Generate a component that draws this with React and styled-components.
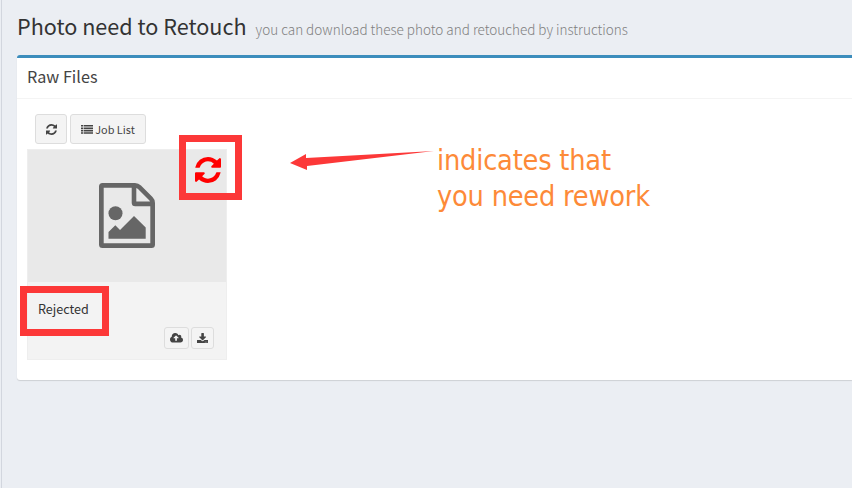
import React from "react";
import styled, { createGlobalStyle } from "styled-components";

const Global = createGlobalStyle`
  * { box-sizing: border-box; }
  body { margin: 0; background: #ebeef3; overflow: hidden; }
`;

const Page = styled.main`
  height: 488px;
  border-left: 1px solid #d2d6de;
  margin-left: 1px;
  padding-left: 15px;
  background: #ebeef3;
  color: #333;
  font-family: "Noto Sans CJK SC", "Open Sans", sans-serif;
`;

const Header = styled.header`
  display: flex;
  align-items: baseline;
  gap: 9px;
  height: 55px;
  padding-top: 10px;
  white-space: nowrap;
`;

const Title = styled.h1`
  margin: 0;
  font-size: 21.6px;
  line-height: 32px;
  font-weight: 400;
`;

const Subtitle = styled.small`
  font-size: 13.5px;
  line-height: 20px;
  font-weight: 200;
  color: #808080;
`;

const Box = styled.section`
  position: relative;
  height: 325px;
  background: #fff;
  border-top: 3px solid #3c8dbc;
  border-radius: 3px 0 0 3px;
  box-shadow: 0 1px 1px rgba(0, 0, 0, 0.13);
`;

const BoxHeader = styled.div`
  height: 41px;
  border-bottom: 1px solid #f4f4f4;
  padding: 7px 10px;
`;

const BoxTitle = styled.h3`
  margin: 0;
  font-size: 16.2px;
  line-height: 22px;
  font-weight: 400;
  color: #444;
`;

const BoxBody = styled.div`
  padding: 15px 10px;
`;

const Toolbar = styled.div`
  display: flex;
  gap: 3px;
  padding-left: 8px;
  margin-bottom: 5px;
`;

const Button = styled.button`
  display: flex;
  align-items: center;
  justify-content: center;
  gap: 2px;
  width: ${(p) => p.$w}px;
  height: ${(p) => p.$h}px;
  padding: 0;
  border: 1px solid #ddd;
  border-radius: 3px;
  background: #f4f4f4;
  color: #444;
  font: 400 10.9px/16px "Noto Sans CJK SC", "Open Sans", sans-serif;
`;

const Icon = styled.svg`
  display: block;
  fill: currentColor;
`;

const Card = styled.article`
  width: 200px;
  height: 211px;
  border: 1px solid #eee;
  background: #f3f3f3;
`;

const Preview = styled.div`
  position: relative;
  display: flex;
  justify-content: center;
  height: 132px;
  padding-top: 33px;
  background: #e9e9e9;
  color: #666;
`;

const ReworkBadge = styled.div`
  position: absolute;
  top: 7px;
  right: 5px;
  color: #f00;
`;

const Details = styled.div`
  padding: 17px 12px 0 10px;
`;

const Status = styled.div`
  font-size: 12.6px;
  line-height: 20px;
`;

const Actions = styled.div`
  display: flex;
  justify-content: flex-end;
  gap: 2px;
  margin-top: 8px;
`;

const Highlight = styled.div`
  position: absolute;
  left: ${(p) => p.$x}px;
  top: ${(p) => p.$y}px;
  width: ${(p) => p.$w}px;
  height: ${(p) => p.$h}px;
  border: 7px solid #fc3838;
`;

const Arrow = styled.svg`
  position: absolute;
  left: 273px;
  top: 92px;
`;

const Note = styled.p`
  position: absolute;
  left: 420px;
  top: 84px;
  margin: 0;
  font: 28.6px/36px "DejaVu Sans Condensed", "DejaVu Sans", sans-serif;
  font-stretch: condensed;
  letter-spacing: -0.2px;
  white-space: nowrap;
  color: #fd8a38;
`;

function RefreshIcon({ size }) {
  return (
    <Icon width={size} height={size} viewBox="0 0 1536 1536">
      <path d="M1511 928q0 5-1 7-64 268-268 434.5t-478 166.5q-146 0-282.500-55t-243.500-157l-129 129q-19 19-45 19t-45-19-19-45v-448q0-26 19-45t45-19h448q26 0 45 19t19 45-19 45l-137 137q71 66 161 102t187 36q134 0 250-65t186-179q11-17 53-117 8-23 30-23h192q13 0 22.500 9.500t9.500 22.500zm25-800v448q0 26-19 45t-45 19h-448q-26 0-45-19t-19-45 19-45l138-138q-148-137-349-137-134 0-250 65t-186 179q-11 17-53 117-8 23-30 23h-199q-13 0-22.500-9.500t-9.500-22.500v-7q65-268 270-434.500t480-166.500q146 0 284 55.500t245 156.500l130-129q19-19 45-19t45 19 19 45z" />
    </Icon>
  );
}

function FileImageIcon() {
  return (
    <Icon width="56" height="65" viewBox="0 0 56 65">
      <path
        fillRule="evenodd"
        d="M3.500 0H36Q39.500 0 42 2.500L53.500 14Q56 16.500 56 20V61.500Q56 65 52.500 65H3.500Q0 65 0 61.500V3.500Q0 0 3.500 0ZM4.700 4.700V60.300H51.300V23.200H36.200Q32.700 23.200 32.700 19.700V4.700ZM37.300 5V18.600H51Q50.700 17.700 50 17L39 6Q38.300 5.300 37.300 5Z"
      />
      <circle cx="16.500" cy="30.300" r="7" />
      <path d="M9.500 55.800V49L16.300 42.200L21 46.900L35 32.900L46.700 44.600V55.800Z" />
    </Icon>
  );
}

function ListIcon() {
  return (
    <Icon width="12" height="9" viewBox="0 0 12 9">
      {[0, 2.4, 4.800, 7.200].map((y) => (
        <path key={y} d={`M0 ${y}h2v1.600h-2zM2.600 ${y}h9.400v1.600h-9.400z`} />
      ))}
    </Icon>
  );
}

function UploadIcon() {
  return (
    <Icon width="13" height="10.4" viewBox="-64 256 1920 1280">
      <path d="M1216 864q0-14-9-23l-352-352q-9-9-23-9t-23 9l-351 351q-10 12-10 24 0 14 9 23t23 9h224v352q0 13 9.500 22.500t22.500 9.500h192q13 0 22.500-9.500t9.500-22.500v-352h224q13 0 22.500-9.500t9.500-22.500zm640 288q0 159-112.500 271.500t-271.500 112.500h-1088q-185 0-316.500-131.500t-131.500-316.500q0-130 70-240t188-165q-2-30-2-43 0-212 150-362t362-150q156 0 285.500 87t188.500 231q71-62 166-62 106 0 181 75t75 181q0 76-41 138 130 31 213.500 135.500t83.500 238.500z" />
    </Icon>
  );
}

function DownloadIcon() {
  return (
    <Icon width="11.200" height="10.400" viewBox="64 0 1664 1536">
      <path d="M1344 1344q0-26-19-45t-45-19-45 19-19 45 19 45 45 19 45-19 19-45zm256 0q0-26-19-45t-45-19-45 19-19 45 19 45 45 19 45-19 19-45zm128-224v320q0 40-28 68t-68 28h-1472q-40 0-68-28t-28-68v-320q0-40 28-68t68-28h465l135 136q58 56 136 56t136-56l136-136h464q40 0 68 28t28 68zm-325-569q17 41-14 70l-448 448q-18 19-45 19t-45-19l-448-448q-31-29-14-70 17-39 59-39h256v-448q0-26 19-45t45-19h256q26 0 45 19t19 45v448h256q42 0 59 39z" />
    </Icon>
  );
}

export default function App() {
  return (
    <>
      <Global />
      <Page>
        <Header>
          <Title>Photo need to Retouch</Title>
          <Subtitle>you can download these photo and retouched by instructions</Subtitle>
        </Header>
        <Box>
          <BoxHeader>
            <BoxTitle>Raw Files</BoxTitle>
          </BoxHeader>
          <BoxBody>
            <Toolbar>
              <Button $w={32} $h={30} aria-label="Refresh"><RefreshIcon size={11} /></Button>
              <Button $w={76} $h={30}><ListIcon />Job List</Button>
            </Toolbar>
            <Card>
              <Preview>
                <FileImageIcon />
                <ReworkBadge><RefreshIcon size={26} /></ReworkBadge>
              </Preview>
              <Details>
                <Status>Rejected</Status>
                <Actions>
                  <Button $w={25} $h={22} aria-label="Upload"><UploadIcon /></Button>
                  <Button $w={23} $h={22} aria-label="Download"><DownloadIcon /></Button>
                </Actions>
              </Details>
            </Card>
          </BoxBody>
          <Highlight $x={162} $y={77} $w={63} $h={65} />
          <Highlight $x={3} $y={228} $w={89} $h={50} />
          <Arrow width="146" height="22" viewBox="0 0 146 22">
            <path d="M0 13L16 4V8L144 1L17 16V20Z" fill="#fc3838" />
          </Arrow>
          <Note>indicates that<br />you need rework</Note>
        </Box>
      </Page>
    </>
  );
}
